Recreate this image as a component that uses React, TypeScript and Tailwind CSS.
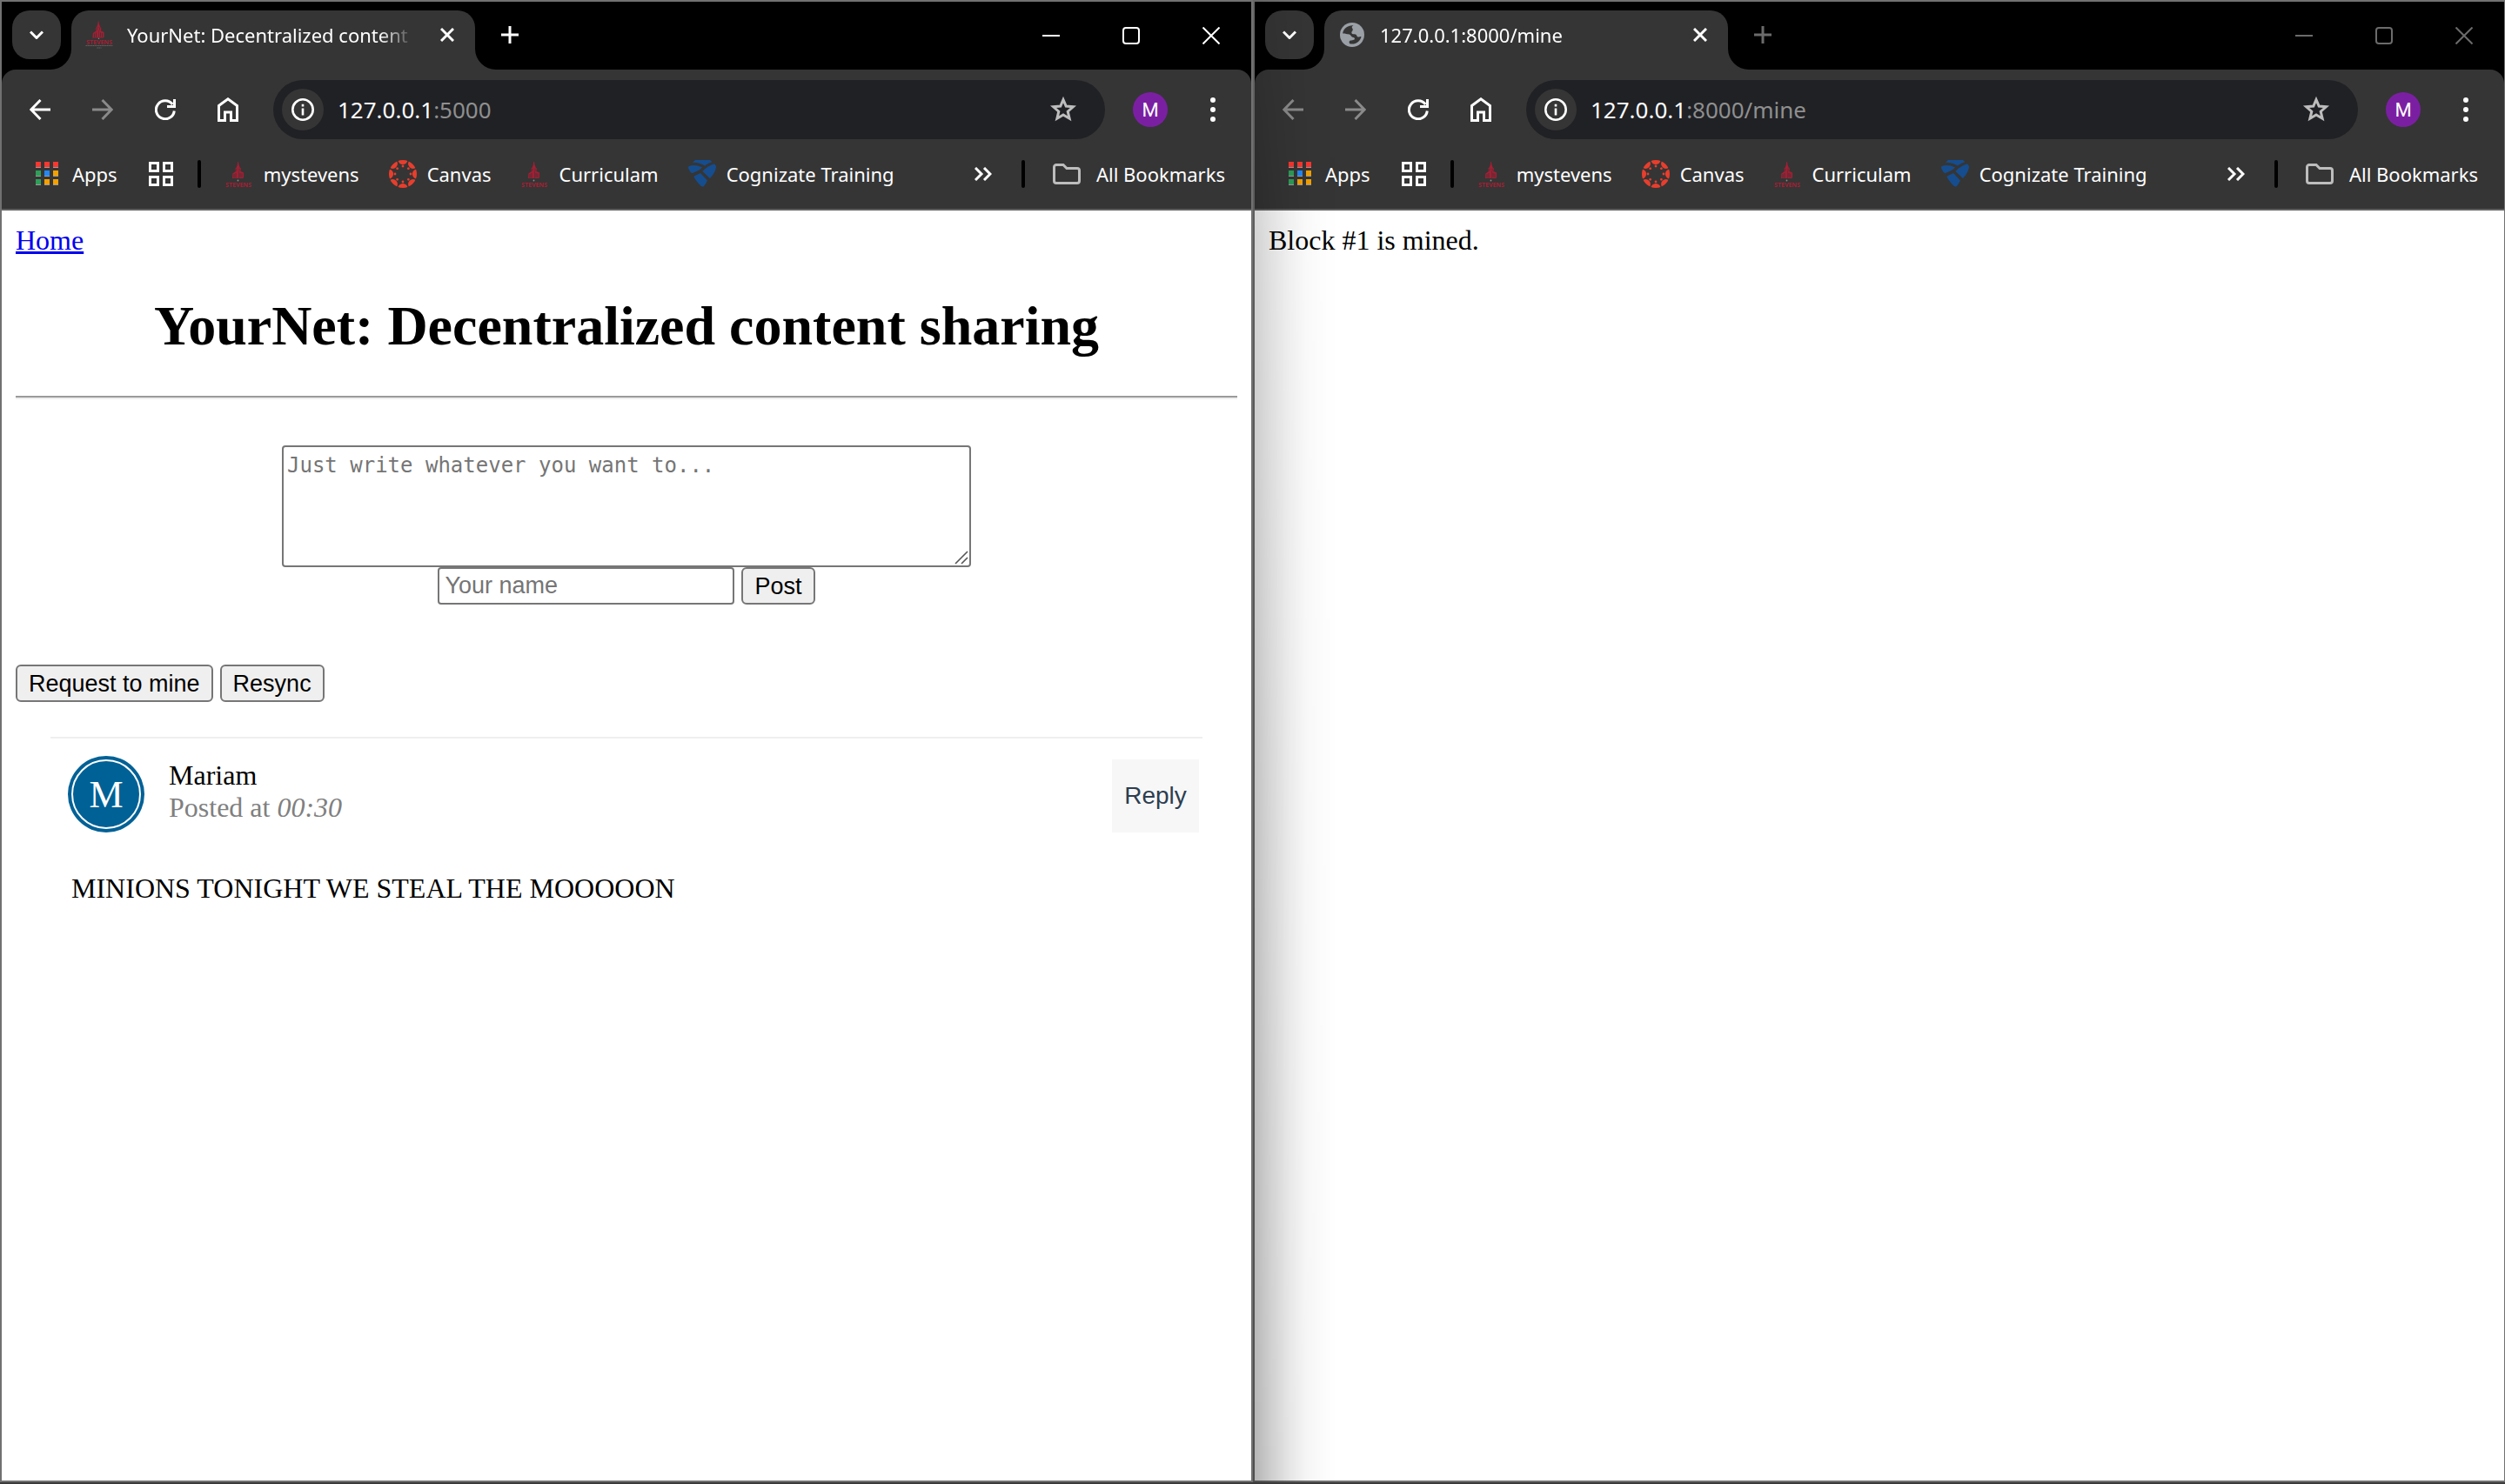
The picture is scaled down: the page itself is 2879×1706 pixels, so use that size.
import React from "react";

type WindowProps = {
  favicon: React.ReactNode;
  title: string;
  fullTitle: string;
  host: string;
  rest: string;
  active: boolean;
  canGoBack: boolean;
  children: React.ReactNode;
};

function StevensTower() {
  return (
    <>
      <g fill="#a31f34">
        <path d="M15.700 0h0.800l0.500 3.500 1.400 3.500h-4.400l1.300-3.500z" />
        <path d="M13.200 7h6v3.500h-6z" />
        <path d="M9.800 13.500l5.200-3.500h1.500v9h-7z" />
        <path d="M17 10l5.600 2.500v5.500l-1 1h-4.600z" />
      </g>
      <path
        d="M11.500 14v4.500M13.500 13v5.500M18.500 12.800v5M20.500 13.500v4.500M14.500 7.800v2M17.500 7.800v2"
        stroke="#353535"
        strokeWidth="0.800"
        fill="none"
      />
    </>
  );
}

function StevensLogo() {
  return (
    <svg viewBox="0 0 32 32" className="size-8 shrink-0 overflow-visible" aria-hidden="true">
      <g transform="translate(-1.500 2)">
        <StevensTower />
      </g>
      <circle cx="14.500" cy="23.500" r="0.900" fill="#8a8a8a" />
      <text
        x="15"
        y="31"
        textAnchor="middle"
        fontFamily="Open Sans, sans-serif"
        fontWeight="700"
        fontSize="7"
        fill="#a31f34"
      >
        STEVENS
      </text>
    </svg>
  );
}

function StevensFavicon() {
  return (
    <svg viewBox="0 0 32 32" className="size-8 shrink-0 overflow-visible" aria-hidden="true">
      <g transform="translate(-1 0.500)">
        <StevensTower />
      </g>
      <circle cx="15.500" cy="20.300" r="0.700" fill="#8a8a8a" />
      <text
        x="16"
        y="27"
        textAnchor="middle"
        fontFamily="Open Sans, sans-serif"
        fontWeight="700"
        fontSize="7"
        fill="#a31f34"
      >
        STEVENS
      </text>
      <path d="M0.500 28.500h31M13.500 31h5" stroke="#6d6d6d" strokeWidth="0.800" strokeDasharray="1.500 0.500" />
    </svg>
  );
}

function GlobeIcon() {
  return (
    <svg viewBox="0 0 28 28" className="mx-0.5 size-7 shrink-0" aria-hidden="true">
      <circle cx="14" cy="14" r="14" fill="#9aa0a6" />
      <path
        d="M15.500 3.200C9.500 2.600 4.200 6.400 3.200 12.200c2.600 1.500 5 .3 7.600 1.400 2.100.9 1.800 2.700 3.600 3.200 1.600.5 2.300.2 2.600 2-.9 2-4.600 1.200-6 2.400-.7.900-.3 2 .2 3 5.800 1.600 12-1.700 13.300-8.200-1.700-.2-2.400 1-4 .4-1.500-.7-.9-2.500-2.600-3-2-.4-3.900.3-4.500-1.500-.4-1.700 1.500-2.200 1.400-3.900 0-1.500-1.300-1.700-1-3 .1-.8.900-1.200 1.700-1.800z"
        fill="#353535"
      />
      <path d="M4.500 14.500c2 .2 4.500-.4 6.500 1.100 1.500 1.300 1.400 2.600 3.500 3.300-2 .6-4.500.7-5.300 2.500-.3.800 0 1.700-.2 2.200-3-1.500-5-5-4.500-9.100z" fill="#9aa0a6" />
    </svg>
  );
}

function CanvasLogo() {
  const angles = [0, 45, 90, 135, 180, 225, 270, 315];
  return (
    <svg viewBox="0 0 32 32" className="size-8 shrink-0" aria-hidden="true">
      <defs>
        <clipPath id="canvas-disc">
          <circle cx="16" cy="16" r="16" />
        </clipPath>
      </defs>
      <g fill="#e83e2d">
        {angles.map((a) => (
          <g key={a} transform={`rotate(${a} 16 16)`}>
            <circle cx="16" cy="-0.500" r="5.600" clipPath="url(#canvas-disc)" />
            <circle cx="16" cy="7" r="1.400" />
          </g>
        ))}
      </g>
    </svg>
  );
}

function CognizateLogo() {
  return (
    <svg viewBox="0 0 32 32" className="size-8 shrink-0" aria-hidden="true">
      <g fill="#154d8f">
        <path d="M8 0h17l2.500 2.200c-3.500.8-6 2.300-8.500 4.300C15 4 10 2.600 4.800 2.800z" />
        <path d="M1 7c4-1.600 10-1.300 15.200 1.600-2.800 2.800-7 5-12 6.700C1.500 13 0 10 0 8.500 0 7.800.3 7.300 1 7z" />
        <path d="M30 4.600c1.200.8 2 2 2 3.700-.6 4.500-3.500 9-7 12.600L16.300 13C20 9 24.500 6 30 4.600z" />
        <path d="M6.300 18.700L14 15l8 8.600c-1.300 2.400-2.500 4.800-4 6.400-1.200.8-2.400.7-3.400-.2C11.600 27 8.300 23 6.300 18.700z" />
      </g>
    </svg>
  );
}

function AppsIcon() {
  const colors = ["#f8372f", "#f8372f", "#f8372f", "#2e9e58", "#2388f5", "#f2a100", "#2e9e58", "#f2a100", "#f2a100"];
  return (
    <svg viewBox="0 0 26 28" className="h-7 w-[26px] shrink-0" aria-hidden="true">
      {colors.map((c, i) => (
        <g key={i}>
          <rect x={(i % 3) * 10} y={Math.floor(i / 3) * 10} width="6" height="7" fill="#9a9a9a" />
          <rect x={(i % 3) * 10} y={Math.floor(i / 3) * 10} width="6" height="6" fill={c} />
        </g>
      ))}
    </svg>
  );
}

function Stroke({ d, box, className, width = 3 }: { d: string; box: string; className: string; width?: number }) {
  return (
    <svg viewBox={box} className={className} fill="none" stroke="currentColor" strokeWidth={width} aria-hidden="true">
      <path d={d} />
    </svg>
  );
}

function NavButton({ label, disabled, children }: { label: string; disabled?: boolean; children: React.ReactNode }) {
  return (
    <button
      aria-label={label}
      disabled={disabled}
      className="flex h-14 w-[72px] items-center justify-center text-white disabled:text-[#8a8a8a]"
    >
      {children}
    </button>
  );
}

function Flare({ side }: { side: "left" | "right" }) {
  return (
    <svg
      viewBox="0 0 24 24"
      className={side === "left" ? "absolute right-full bottom-0 size-6" : "absolute bottom-0 left-full size-6 -scale-x-100"}
      aria-hidden="true"
    >
      <path d="M24 0V24H0A24 24 0 0 0 24 0z" fill="#353535" />
    </svg>
  );
}

function Bookmark({ icon, label }: { icon: React.ReactNode; label: string }) {
  return (
    <a href="#" className="flex items-center gap-3 whitespace-nowrap">
      {icon}
      {label}
    </a>
  );
}

function BrowserWindow({ favicon, title, fullTitle, host, rest, active, canGoBack, children }: WindowProps) {
  const dim = active ? "text-white" : "text-[#6b6b6b]";
  return (
    <section className="flex min-w-0 flex-col border-2 border-[#717171] bg-black font-['Noto_Sans',sans-serif]">
      <header className="flex h-[78px] shrink-0 items-end">
        <button
          aria-label="Search tabs"
          className="mb-3 ml-3 flex size-14 items-center justify-center rounded-[20px] bg-[#353535] text-white"
        >
          <Stroke box="0 0 16 10" className="h-2.5 w-4" d="M1 1.500l7 7 7-7" />
        </button>
        <div
          title={fullTitle}
          className="relative ml-3 flex h-[68px] w-[464px] items-center rounded-t-[20px] bg-[#353535] pr-6 pb-3 pl-4"
        >
          <Flare side="left" />
          <Flare side="right" />
          {favicon}
          <span className="ml-4 w-[330px] text-[22px] leading-8 whitespace-nowrap text-white [mask-image:linear-gradient(to_right,black_88%,transparent)]">
            {title}
          </span>
          <button aria-label="Close tab" className="ml-auto flex size-4 items-center justify-center text-white">
            <Stroke box="0 0 16 16" className="size-4" d="M1 1l14 14M15 1L1 15" />
          </button>
        </div>
        <button aria-label="New tab" className={"mb-3 ml-3 flex size-14 items-center justify-center " + dim}>
          <Stroke box="0 0 20 20" className="size-5" d="M10 0v20M0 10h20" />
        </button>
        <div className={"ml-auto flex h-full " + dim}>
          <button aria-label="Minimize" className="flex w-[92px] items-center justify-center">
            <Stroke box="0 0 20 20" className="size-5" width={2} d="M0 10h20" />
          </button>
          <button aria-label="Maximize" className="flex w-[92px] items-center justify-center">
            <Stroke box="0 0 20 20" className="size-5" width={2} d="M4 1h12a3 3 0 0 1 3 3v12a3 3 0 0 1-3 3H4a3 3 0 0 1-3-3V4a3 3 0 0 1 3-3z" />
          </button>
          <button aria-label="Close window" className="flex w-[92px] items-center justify-center">
            <Stroke box="0 0 20 20" className="size-5" width={2} d="M0.500 0.500l19 19M19.500 0.500l-19 19" />
          </button>
        </div>
      </header>

      <div className="shrink-0 rounded-t-2xl border-b-2 border-[#5f5f5f] bg-[#353535] text-white">
        <div className="flex h-[92px] items-center pl-2">
          <NavButton label="Back" disabled={!canGoBack}>
            <Stroke box="0 0 24 24" className="size-6" d="M24 12H2M12.500 1L1.800 12l10.700 11" />
          </NavButton>
          <NavButton label="Forward" disabled>
            <Stroke box="0 0 24 24" className="size-6" d="M0 12H22M11.500 1L22.200 12L11.500 23" />
          </NavButton>
          <NavButton label="Reload">
            <Stroke box="0 0 24 24" className="size-6" d="M20.300 6A10.500 10.500 0 1 0 22.300 13.500M22.500 0V8.500H14" />
          </NavButton>
          <NavButton label="Home">
            <Stroke box="0 0 24 28" className="h-7 w-6" d="M1.500 9.500L12 1.800L22.500 9.500V26.500H15.500V17H8.500V26.500H1.500z" />
          </NavButton>
          <div className="ml-4 flex h-[68px] flex-1 items-center rounded-full bg-[#202125] pr-8 pl-2.5">
            <button aria-label="Site information" className="flex size-12 items-center justify-center rounded-full bg-[#353535]">
              <svg viewBox="0 0 26 26" className="size-[26px]" aria-hidden="true">
                <circle cx="13" cy="13" r="11.700" fill="none" stroke="white" strokeWidth="2.600" />
                <path d="M11.700 11.500h2.600v8h-2.600zM11.700 6.800h2.600v2.600h-2.600z" fill="white" />
              </svg>
            </button>
            <p className="ml-4 text-[26px] leading-9 whitespace-nowrap">
              {host}
              <span className="text-[#8f8f8f]">{rest}</span>
            </p>
            <button aria-label="Bookmark this page" className="ml-auto text-[#bdbdbd]">
              <Stroke
                box="0 0 32 32"
                className="size-8"
                d="M16 4.500l3.200 7.600 8.200.7-6.200 5.400 1.900 8-7.100-4.300-7.100 4.300 1.900-8-6.200-5.400 8.200-.7z"
              />
            </button>
          </div>
          <button
            aria-label="Profile"
            className="ml-8 flex size-10 items-center justify-center rounded-full bg-[#7b1fa2] font-[Roboto,sans-serif] text-[22px]"
          >
            M
          </button>
          <button aria-label="Menu" className="mr-6 ml-8 flex size-10 items-center justify-center">
            <svg viewBox="0 0 6 28" className="h-7 w-1.5" fill="currentColor" aria-hidden="true">
              <circle cx="3" cy="3" r="3" />
              <circle cx="3" cy="14" r="3" />
              <circle cx="3" cy="25" r="3" />
            </svg>
          </button>
        </div>

        <nav aria-label="Bookmarks" className="flex h-[68px] items-center pr-[30px] pb-3 pl-[39px] text-[22px] leading-8">
          <a href="#" className="flex items-center gap-4">
            <AppsIcon />
            Apps
          </a>
          <button aria-label="Tab groups" className="ml-9">
            <Stroke box="0 0 28 28" className="size-7" d="M1.500 1.500h9v9h-9zM17.500 1.500h9v9h-9zM1.500 17.500h9v9h-9zM17.500 17.500h9v9h-9z" />
          </button>
          <span className="mx-7 h-8 w-1 rounded-full bg-black" />
          <div className="flex gap-[34px]">
            <Bookmark icon={<StevensLogo />} label="mystevens" />
            <Bookmark icon={<CanvasLogo />} label="Canvas" />
            <Bookmark icon={<StevensLogo />} label="Curriculam" />
            <Bookmark icon={<CognizateLogo />} label="Cognizate Training" />
          </div>
          <button aria-label="More bookmarks" className="ml-auto">
            <Stroke box="0 0 20 16" className="h-4 w-5" d="M1 1l7 7-7 7M11 1l7 7-7 7" />
          </button>
          <span className="mr-8 ml-[34px] h-8 w-1 rounded-full bg-black" />
          <a href="#" className="flex items-center gap-[18px] whitespace-nowrap">
            <span className="text-[#bdbdbd]">
              <Stroke
                box="0 0 32 24"
                className="h-6 w-8"
                d="M4 1.500h8l4 4h12a2.500 2.500 0 0 1 2.500 2.500v12a2.500 2.500 0 0 1-2.500 2.500H4a2.500 2.500 0 0 1-2.500-2.500V4A2.500 2.500 0 0 1 4 1.500z"
              />
            </span>
            All Bookmarks
          </a>
        </nav>
      </div>

      <main className="flex-1 bg-white p-4 font-['Liberation_Serif',serif] text-[32px] leading-[37px] text-black">
        {children}
      </main>
    </section>
  );
}

const formButton =
  "h-[43px] rounded-md border-2 border-[#767676] bg-[#efefef] px-[13px] font-['Liberation_Sans',sans-serif] text-[27px] leading-8";

function YourNetPage() {
  return (
    <>
      <a href="#" className="text-[#0000ee] underline decoration-3">
        Home
      </a>
      <h1 className="mt-[43px] text-center text-[64px] leading-[74px] font-bold">YourNet: Decentralized content sharing</h1>
      <hr className="mt-[43px] h-1 border-t-2 border-b-2 border-t-[#9a9a9a] border-b-[#eeeeee]" />
      <form className="mt-[53px] flex flex-col items-center" onSubmit={(e) => e.preventDefault()}>
        <div className="relative">
          <textarea
            aria-label="Content"
            placeholder="Just write whatever you want to..."
            className="block h-[140px] w-[792px] max-w-full rounded-sm border-2 border-[#767676] bg-white px-1 py-1.5 font-['DejaVu_Sans_Mono',monospace] text-[24px] leading-[30px] placeholder:text-[#757575]"
          />
          <svg
            viewBox="0 0 16 16"
            className="pointer-events-none absolute right-[3px] bottom-[3px] size-4 bg-white"
            aria-hidden="true"
          >
            <path d="M1 15L15 1M8 15L15 8" stroke="#555555" strokeWidth="1.600" />
          </svg>
        </div>
        <div className="flex gap-2">
          <input
            type="text"
            aria-label="Your name"
            placeholder="Your name"
            className="h-[43px] w-[341px] rounded-sm border-2 border-[#767676] bg-white px-1.5 font-['Liberation_Sans',sans-serif] text-[27px] leading-8 placeholder:text-[#757575]"
          />
          <button className={formButton}>Post</button>
        </div>
      </form>
      <div className="mt-[69px] flex gap-2">
        <button className={formButton}>Request to mine</button>
        <button className={formButton}>Resync</button>
      </div>
      <article className="mx-10 mt-10 border-t-2 border-[#efefef]">
        <div className="flex items-start pt-5 pr-1 pl-5">
          <div className="size-[88px] rounded-full bg-[#006196] p-1">
            <div className="flex size-full items-center justify-center rounded-full border-2 border-white text-[44px] text-white">M</div>
          </div>
          <div className="mt-1 ml-7 flex-1">
            <div>Mariam</div>
            <div className="text-[#808080]">
              Posted at <i>00:30</i>
            </div>
          </div>
          <button className="mt-1 h-[84px] w-[100px] bg-[#f7f7f7] font-['Liberation_Sans',sans-serif] text-[28px] leading-8 text-[#2c3e50]">
            Reply
          </button>
        </div>
        <p className="mt-[46px] pl-6">MINIONS TONIGHT WE STEAL THE MOOOOON</p>
      </article>
    </>
  );
}

export default function App() {
  return (
    <div className="flex h-screen overflow-hidden bg-[#3a3a3a] pb-0.5">
      <div className="-mr-px grid flex-1 grid-cols-2">
        <BrowserWindow
          favicon={<StevensFavicon />}
          title="YourNet: Decentralized content"
          fullTitle="YourNet: Decentralized content sharing"
          host="127.0.0.1"
          rest=":5000"
          active
          canGoBack
        >
          <YourNetPage />
        </BrowserWindow>
        <div className="relative grid min-w-0">
          <BrowserWindow
            favicon={<GlobeIcon />}
            title="127.0.0.1:8000/mine"
            fullTitle="127.0.0.1:8000/mine"
            host="127.0.0.1"
            rest=":8000/mine"
            active={false}
            canGoBack={false}
          >
            <p>Block #1 is mined.</p>
          </BrowserWindow>
          <div className="pointer-events-none absolute inset-y-0 left-0 w-24 bg-[linear-gradient(to_right,rgba(0,0,0,0.3),rgba(0,0,0,0.2)_20%,rgba(0,0,0,0.105)_42%,rgba(0,0,0,0.04)_63%,rgba(0,0,0,0.01)_85%,transparent)] [mask-image:linear-gradient(to_bottom,rgba(0,0,0,0.3),rgba(0,0,0,0.6)_16%,rgba(0,0,0,0.8)_50%,black)]" />
        </div>
      </div>
    </div>
  );
}
